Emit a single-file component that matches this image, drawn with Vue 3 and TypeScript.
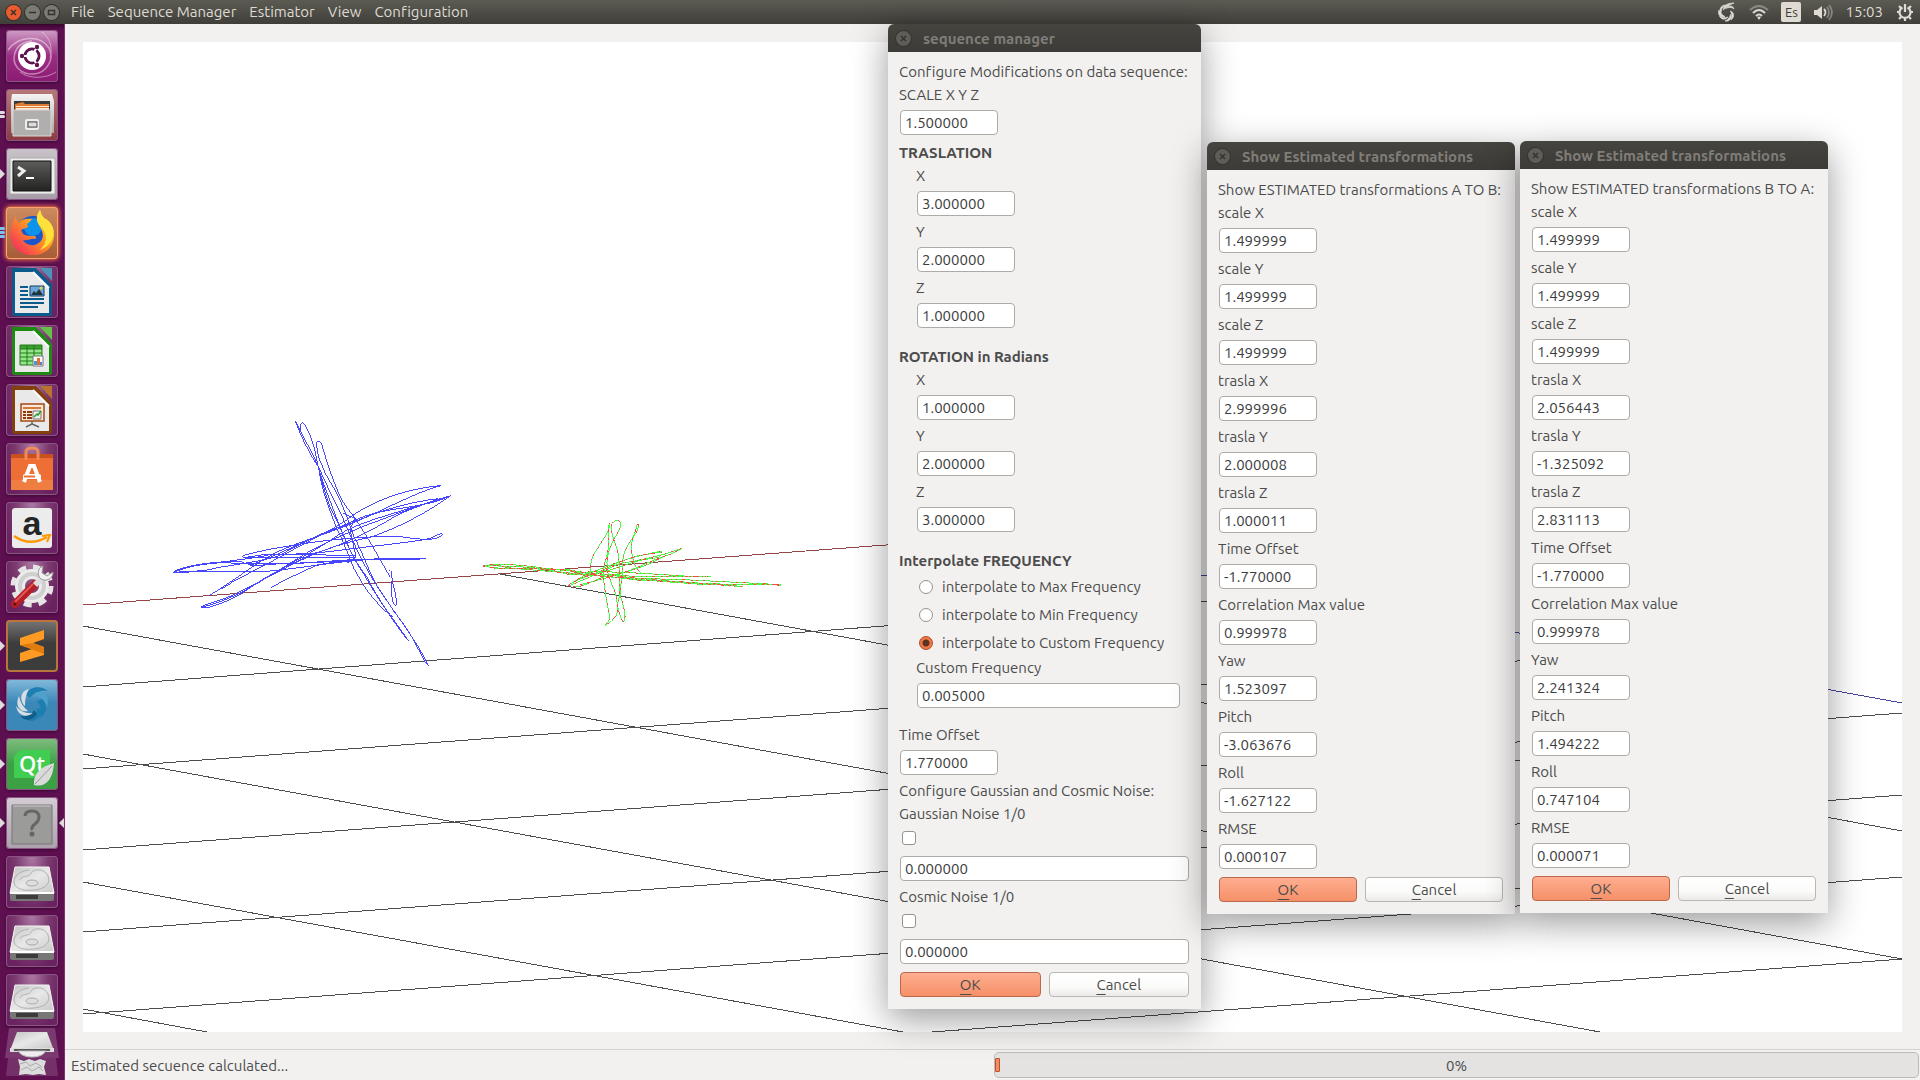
<script setup lang="ts">
import { reactive, ref } from 'vue'

interface Field {
  id: string
  label: string
  value: string
}

interface EstimateWindow {
  id: string
  heading: string
  fields: Field[]
}

const menus = ['File', 'Sequence Manager', 'Estimator', 'View', 'Configuration']

const translation = reactive<Field[]>([
  { id: 'tx', label: 'X', value: '3.000000' },
  { id: 'ty', label: 'Y', value: '2.000000' },
  { id: 'tz', label: 'Z', value: '1.000000' },
])

const rotation = reactive<Field[]>([
  { id: 'rx', label: 'X', value: '1.000000' },
  { id: 'ry', label: 'Y', value: '2.000000' },
  { id: 'rz', label: 'Z', value: '3.000000' },
])

const noise = reactive([
  { id: 'gaussian', label: 'Gaussian Noise 1/0', on: false, value: '0.000000' },
  { id: 'cosmic', label: 'Cosmic Noise 1/0', on: false, value: '0.000000' },
])

const frequencyModes = ['Max', 'Min', 'Custom']
const frequencyMode = ref('Custom')
const scale = ref('1.500000')
const customFrequency = ref('0.005000')
const timeOffset = ref('1.770000')

const estimateLabels = [
  'scale X', 'scale Y', 'scale Z', 'trasla X', 'trasla Y', 'trasla Z',
  'Time Offset', 'Correlation Max value', 'Yaw', 'Pitch', 'Roll', 'RMSE',
]

function makeFields(prefix: string, values: string[]): Field[] {
  return values.map((value, i) => ({ id: `${prefix}-${i}`, label: estimateLabels[i], value }))
}

const estimates = reactive<EstimateWindow[]>([
  {
    id: 'ab',
    heading: 'Show ESTIMATED transformations A TO B:',
    fields: makeFields('ab', [
      '1.499999', '1.499999', '1.499999', '2.999996', '2.000008', '1.000011',
      '-1.770000', '0.999978', '1.523097', '-3.063676', '-1.627122', '0.000107',
    ]),
  },
  {
    id: 'ba',
    heading: 'Show ESTIMATED transformations B TO A:',
    fields: makeFields('ba', [
      '1.499999', '1.499999', '1.499999', '2.056443', '-1.325092', '2.831113',
      '-1.770000', '0.999978', '2.241324', '1.494222', '0.747104', '0.000071',
    ]),
  },
])

const gridLines = [
  [500, 574, 1902, 831], [83, 626, 1902, 959], [83, 754, 1600, 1032],
  [83, 882, 903, 1032], [83, 1009, 207, 1032],
  [83, 687, 1304, 594], [83, 769, 1623, 653], [83, 850, 1902, 713],
  [83, 932, 1902, 795], [83, 1014, 1902, 877], [932, 1032, 1902, 959],
]

// Trajectories are stored at three times the scene resolution.
const blueTracks = [
  'M436 62C450 105 478 160 505 200C520 260 535 320 566 372C590 430 600 460 640 520C680 590 740 680 776 724',
  'M436 62C460 110 490 165 512 215C545 290 575 340 598 400C630 470 660 530 690 570C740 650 800 720 836 798L826 788C800 740 780 690 728 630',
  'M452 90C448 70 456 62 464 74C490 120 495 150 503 195C515 240 540 300 558 350C590 430 610 480 650 530C690 610 740 670 775 722',
  'M500 128C506 118 512 124 516 135C530 185 545 230 560 265C580 320 605 335 625 370C665 430 690 480 720 530',
  'M500 128C500 170 515 195 540 245C575 300 590 350 612 410C650 480 660 540 720 615',
  'M505 200C520 290 540 330 560 385C585 430 600 490 640 555C670 600 710 640 728 650',
  'M718 512C728 510 724 530 728 550C738 580 740 600 738 615C730 618 724 600 724 545',
  'M872 257C800 262 690 290 610 345C560 385 480 420 410 460C340 500 270 530 178 586',
  'M872 257C800 276 700 330 630 360C540 400 430 430 370 462C300 500 250 545 178 586',
  'M902 287C830 325 720 320 640 350C560 385 480 420 430 440C380 465 340 480 300 497',
  'M864 296C780 306 690 330 600 372C510 395 440 440 380 470C310 490 230 495 160 512L70 517',
  'M902 287C820 310 720 350 650 375C540 420 480 450 420 490C350 530 260 600 152 622C170 630 250 600 290 570C360 520 430 490 480 465C560 440 620 415 700 370C770 325 830 312 902 287',
  'M902 287C820 345 740 385 660 412C590 425 520 450 480 468C420 495 340 540 260 580C220 600 180 606 152 622',
  'M820 312C700 350 620 370 560 408C500 450 440 480 415 495',
  'M878 403C860 425 810 418 750 410C660 408 580 415 480 428C400 440 340 450 280 466C272 476 290 472 340 464C430 460 520 465 614 468',
  'M878 403C870 395 850 418 815 420C740 432 650 440 560 452C500 460 440 464 370 462C290 480 210 484 120 500',
  'M828 475C740 474 610 478 530 484C430 492 300 495 230 488C170 488 110 500 70 517C160 514 260 516 350 514C450 505 560 485 640 480C710 478 780 482 828 475',
  'M70 517C90 500 180 484 270 484C300 496 320 500 350 493C430 490 540 488 608 478',
  'M278 472L610 472M580 340L614 355L600 390L618 470L590 490M364 563C400 540 450 520 500 495C560 485 600 480 640 478',
]

const greenTracks = [
  'M40 197C90 190 150 194 210 203C270 212 340 215 390 222C500 236 600 244 700 250C790 255 870 252 930 255',
  'M40 199L110 207L250 207L370 220L470 228L600 229L724 230',
  'M60 194L130 205L260 216L390 226L500 240L640 246L740 254L818 260',
  'M70 204L200 207L290 208L400 230L540 236L660 240L780 246L932 254L932 257L905 252',
  'M50 196L180 202L300 220L380 214L520 220L640 228L720 230',
  'M210 203L290 222L390 228L560 243L680 252L800 257',
  'M294 256C340 228 370 225 410 205C460 175 520 165 575 153',
  'M296 258C350 235 400 215 450 190C510 180 570 170 636 145',
  'M310 261C350 262 380 230 430 225C500 210 530 185 600 163L636 145',
  'M324 236C380 220 420 212 480 190C520 175 550 178 570 170',
  'M330 254C390 240 440 225 500 205C540 195 570 172 600 163',
  'M300 252L345 225L430 192L500 168L575 156',
  'M418 68C425 90 390 130 370 165C360 190 360 210 362 220',
  'M418 68C412 100 420 140 410 170C395 210 400 240 408 290C412 320 420 340 418 360L406 376',
  'M426 70C440 55 455 62 452 78C445 100 430 115 418 150C400 200 420 240 435 275C445 310 442 335 440 345C430 360 420 368 406 376',
  'M424 72C422 110 440 130 445 165C450 200 446 250 448 290C436 320 450 345 458 366',
  'M506 74C500 68 500 85 490 110C470 140 458 160 458 190C460 230 448 260 452 290C460 320 468 340 464 360L458 366',
  'M506 74C506 95 484 110 485 135C484 170 490 195 514 222',
]
</script>

<template>
  <div class="desktop">
    <header class="panel">
      <div class="window-controls">
        <button class="control close" aria-label="Close">
          <svg viewBox="0 0 15 15"><path d="M5 5l5 5M10 5l-5 5" /></svg>
        </button>
        <button class="control" aria-label="Minimize">
          <svg viewBox="0 0 15 15"><path d="M4 7.500h7" /></svg>
        </button>
        <button class="control" aria-label="Restore">
          <svg viewBox="0 0 15 15"><path d="M4.500 5.500h6v4h-6z" /></svg>
        </button>
      </div>
      <nav class="menus">
        <button v-for="menu in menus" :key="menu" class="menu">{{ menu }}</button>
      </nav>
      <div class="indicators">
        <svg class="indicator" viewBox="0 0 20 20" aria-hidden="true">
          <g fill="#dfdbd2" stroke="#dfdbd2" stroke-width=".700">
            <path d="M17 1C11 1 6 3 6.500 8C8 5 12 3 17 1z" /><path d="M8 3C3 4 2 8 4 12C4 8 5 5 8 3z" />
            <path d="M2 8C0 13 4 16 8 14.500C5 13 3 11 2 8z" /><path d="M2.500 14C4 18 9 18 11 15C8 16 5 16 2.500 14z" />
            <path d="M8 19C13 20 15 16 13.500 12.500C13 15 11 18 8 19z" /><path d="M14 18C18 15 17 10 13.500 9C15 12 15 15 14 18z" />
            <path d="M17 7C16 3 11 3 8.500 6.500C12 5 15 5 17 7z" />
          </g>
        </svg>
        <svg class="indicator" viewBox="0 0 20 20" aria-hidden="true">
          <g fill="none" stroke="#dfdbd2" stroke-width="2">
            <path d="M1 8Q10 0 19 8" opacity=".4" /><path d="M4 11Q10 5 16 11" /><path d="M7 14Q10 11 13 14" />
          </g>
          <path d="M10 18l-2-3q2-1 4 0z" fill="#dfdbd2" />
        </svg>
        <span class="keyboard">Es</span>
        <svg class="indicator" viewBox="0 0 20 20" aria-hidden="true">
          <path d="M1 8h3l5-4v13l-5-4H1z" fill="#dfdbd2" />
          <g fill="none" stroke="#dfdbd2" stroke-width="1.800">
            <path d="M11 7q3 3 0 7" /><path d="M14 5q4 5 0 11M16 3q6 7 0 15" opacity=".4" />
          </g>
        </svg>
        <span class="clock">15:03</span>
        <svg class="indicator" viewBox="0 0 20 20" aria-hidden="true">
          <path d="M7.500 5.500a5.500 5.500 0 1 0 5 0" fill="none" stroke="#dfdbd2" stroke-width="2.200" />
          <path d="M10 2v8M2 10h3M15 10h3M4 4l2 2M16 4l-2 2M4 17l2-2M16 17l-2-2M10 15v4" stroke="#dfdbd2" stroke-width="2.200" />
        </svg>
      </div>
    </header>

    <div class="workspace">
      <aside class="launcher">
        <svg class="defs" aria-hidden="true">
          <defs>
            <linearGradient id="metal" x2="0" y2="1">
              <stop offset="0" stop-color="#f4f4f4" /><stop offset="1" stop-color="#a9a9a9" />
            </linearGradient>
            <linearGradient id="disk" x2="1" y2="1">
              <stop offset="0" stop-color="#c4c4c4" /><stop offset=".5" stop-color="#e8e8e8" /><stop offset="1" stop-color="#c9c9c9" />
            </linearGradient>
            <linearGradient id="screen" x2="0" y2="1">
              <stop offset="0" stop-color="#5c5c5a" /><stop offset="1" stop-color="#232322" />
            </linearGradient>
            <linearGradient id="fox" x1="1" y1="0" x2="0" y2="1">
              <stop offset="0" stop-color="#fff13a" /><stop offset=".45" stop-color="#ff9a1f" /><stop offset="1" stop-color="#f5156c" />
            </linearGradient>
            <symbol id="drive" viewBox="0 0 52 52">
              <path d="M9 11h34l5 26H4z" fill="url(#disk)" stroke="#f5f5f5" />
              <path d="M4 37h44v6q0 2-2 2H6q-2 0-2-2z" fill="#777" />
              <path d="M4 36h44v2H4z" fill="#fff" />
              <path d="M10 39h22v4H10z" fill="#3b3b3b" />
              <path d="M23 14C12 15 7 22 8 27C10 34 20 35 28 34C40 33 45 27 42 20C39 13 31 13 27 15C24 17 26 19 21 20C17 21 15 21 14 24" fill="none" stroke="#b2b2b2" />
              <ellipse cx="26" cy="27" rx="6" ry="3" fill="#ddd" stroke="#aaa" />
            </symbol>
          </defs>
        </svg>

        <button class="tile dash" aria-label="Search your computer">
          <svg viewBox="0 0 52 52">
            <g fill="none" stroke="#fff" opacity=".45">
              <path d="M2 20C12 6 34 4 43 18C49 30 40 43 28 44C16 45 8 37 8 28C9 16 16 12 26 11" stroke-width="1.500" />
              <path d="M50 42C40 49 22 49 14 42M36 2C44 8 47 18 44 28" />
            </g>
            <circle cx="26" cy="26" r="14" fill="#fff" />
            <circle cx="26" cy="26" r="7" fill="none" stroke="#5d1350" stroke-width="3" />
            <path d="M26 26L16 26M26 26L31 17M26 26L31 35" stroke="#fff" stroke-width="2" />
            <circle cx="26" cy="26" r="5.500" fill="#fff" />
            <g fill="#5d1350"><circle cx="16" cy="26" r="2.200" /><circle cx="31" cy="17" r="2.200" /><circle cx="31" cy="35" r="2.200" /></g>
          </svg>
        </button>
        <button class="tile files" aria-label="Files">
          <span class="pips"><i></i><i></i></span>
          <svg viewBox="0 0 52 52">
            <path d="M6 5h40l2 7v32H5V12z" fill="url(#metal)" />
            <path d="M8 12h36v10H8z" fill="#3a3a38" />
            <path d="M9 15l8-2 2 2h24v8H9z" fill="#e07b33" /><path d="M10 17h33v1H10zM10 19h33v2H10z" fill="#fbe8d0" />
            <path d="M7 21h38v26H7z" fill="#b0afad" stroke="#d8d8d6" />
            <rect x="20" y="31" width="12" height="9" rx="1" fill="#bbb" stroke="#eee" stroke-width="2" />
            <rect x="22" y="33" width="9" height="5" fill="#ddd" stroke="#555" />
          </svg>
        </button>
        <button class="tile terminal" aria-label="Terminal">
          <span class="arrow"></span>
          <svg viewBox="0 0 52 52">
            <rect x="4" y="10" width="45" height="36" rx="1" fill="#eee" stroke="#aaa" />
            <path d="M7 13h38v30H7z" fill="url(#screen)" stroke="#111" />
            <path d="M12 19l6 4-6 5" fill="none" stroke="#eee" stroke-width="3" /><path d="M20 30h8" stroke="#fff" stroke-width="2" />
          </svg>
        </button>
        <button class="tile firefox" aria-label="Firefox">
          <span class="pips three"><i></i><i></i><i></i></span>
          <svg viewBox="0 0 52 52">
            <circle cx="27" cy="26" r="17" fill="#1c56c9" /><circle cx="27" cy="20" r="9" fill="#0d93ec" />
            <path d="M10 9C6 16 3 25 5 32C8 44 19 49 29 48C41 47 49 38 48 26C48 19 42 13 38 11Q35 8 34 3C30 9 30 14 34 20C39 28 37 34 31 37C26 40 19 37 17 33C22 34 25 31 29 32Q31 31 29 29C25 29 20 29 17 27L15 23L22 20L21 17Q24 15 26 12C19 11 15 13 13 16Q10 14 10 9z" fill="url(#fox)" />
            <path d="M34 3C29 10 30 15 36 21C42 28 41 36 34 43C46 39 51 26 45 17Q43 13 38 11Q35 8 34 3z" fill="#ffe13b" />
          </svg>
        </button>
        <button class="tile" aria-label="LibreOffice Writer">
          <svg viewBox="0 0 52 52">
            <path d="M6 2h24l16 17v28q0 3-3 3H9q-3 0-3-3z" fill="#0b5a8c" /><path d="M34 2h12v13z" fill="#4b93b8" />
            <path d="M9 6h18l16 16v25H9z" fill="#e9e9e9" /><path d="M27 6l16 16" stroke="#fff" stroke-width="2" />
            <path d="M14 21h8M14 25h8M14 29h8M14 33h24M14 37h24M14 41h18" stroke="#0b5a8c" stroke-width="2" />
            <path d="M24 20h14v10H24z" fill="#6aa7d8" stroke="#0b3f68" /><path d="M25 29l3-4 2 2 3-4 4 6z" fill="#24343b" /><circle cx="35" cy="22" r="1.500" fill="#edcb42" />
          </svg>
        </button>
        <button class="tile" aria-label="LibreOffice Calc">
          <svg viewBox="0 0 52 52">
            <path d="M6 2h24l16 17v28q0 3-3 3H9q-3 0-3-3z" fill="#1e8a14" /><path d="M34 2h12v13z" fill="#64c04a" />
            <path d="M9 6h18l16 16v25H9z" fill="#e9e9e9" /><path d="M27 6l16 16" stroke="#fff" stroke-width="2" />
            <path d="M14 20h22v20H14z" fill="#96e58b" /><path d="M14 20h22v4H14z" fill="#3c9f31" />
            <path d="M14 20h22v20H14zM14 24h22M14 28h22M14 32h22M14 36h22M21 20v20M28 20v20" fill="none" stroke="#1e7a18" />
            <path d="M27 31h10v10H27z" fill="#fff" stroke="#777" /><path d="M28 36h3v4h-3z" fill="#3a9bdc" /><path d="M31 33h3v7h-3z" fill="#e8702a" /><path d="M34 37h2v3h-2z" fill="#5a7bd0" />
          </svg>
        </button>
        <button class="tile" aria-label="LibreOffice Impress">
          <svg viewBox="0 0 52 52">
            <path d="M6 2h24l16 17v28q0 3-3 3H9q-3 0-3-3z" fill="#83400f" /><path d="M34 2h12v13z" fill="#b9732f" />
            <path d="M9 6h18l16 16v25H9z" fill="#e9e9e9" /><path d="M27 6l16 16" stroke="#fff" stroke-width="2" />
            <path d="M15 20h23v17H15z" fill="#fbe7d8" stroke="#a34a17" stroke-width="1.500" /><path d="M17 24h18" stroke="#d57a3d" stroke-width="2" />
            <path d="M17 28h9M17 31h9M17 34h9" stroke="#8c3b10" stroke-width="2" stroke-dasharray="3 1 5 0" />
            <path d="M27 27h8v8h-8z" fill="#eee" stroke="#777" /><path d="M28 33l3-3 1 1 3-4" fill="none" stroke="#2aa02a" stroke-width="1.500" />
            <path d="M26 37v3l-6 3M26 40l7 3" fill="none" stroke="#666" stroke-width="1.500" />
          </svg>
        </button>
        <button class="tile" aria-label="Ubuntu Software">
          <svg viewBox="0 0 52 52">
            <path d="M5 11h42v36H5z" fill="#ee6f35" /><path d="M5 11h42v4H5z" fill="#c95120" /><path d="M5 37h42v10H5z" fill="#f07d42" />
            <path d="M20 17V9q0-4 6-4t6 4v8" fill="none" stroke="#f08a5b" stroke-width="3" />
            <path d="M18 39l6-16h4l6 16" fill="none" stroke="#fff" stroke-width="4" /><rect x="17" y="31" width="18" height="5" rx="2" fill="#fff" /><path d="M18 33.500h11" stroke="#ee6f35" stroke-width="2" />
          </svg>
        </button>
        <button class="tile" aria-label="Amazon">
          <svg viewBox="0 0 52 52">
            <rect x="6" y="6" width="40" height="40" rx="3" fill="#ececec" />
            <text x="26" y="33" text-anchor="middle" font-family="Liberation Sans, sans-serif" font-weight="700" font-size="34" fill="#242424">a</text>
            <path d="M8 34Q24 45 41 35" fill="none" stroke="#f90" stroke-width="2.500" /><path d="M36 34l8-1-3 7" fill="none" stroke="#f90" stroke-width="2" />
          </svg>
        </button>
        <button class="tile" aria-label="System Settings">
          <svg viewBox="0 0 52 52">
            <circle cx="26" cy="25" r="19" fill="none" stroke="#e4e4e4" stroke-width="5" stroke-dasharray="8 7" />
            <circle cx="26" cy="25" r="12" fill="none" stroke="#ececec" stroke-width="10" /><circle cx="26" cy="25" r="12" fill="none" stroke="#cfcfcf" stroke-width="4" />
            <path d="M9 43L29 23" stroke="#b81f24" stroke-width="8" stroke-linecap="round" /><path d="M9 41L27 23" stroke="#e0575b" stroke-width="2" />
            <circle cx="9" cy="43" r="1.500" fill="#5c0f12" />
            <path d="M29 24L36 17" stroke="#ddd" stroke-width="6" /><path d="M37 5C31 7 31 15 35 18C40 21 47 18 47 11L41 15L36 12z" fill="#f1f1f1" stroke="#999" />
          </svg>
        </button>
        <button class="tile sublime" aria-label="Sublime Text">
          <span class="arrow"></span>
          <svg viewBox="0 0 52 52">
            <path d="M14 18L38 10v9L27 23l11 4v8L14 42v-9l12-4-12-4z" fill="#ff9a22" /><path d="M14 25L38 34v-7L27 23z" fill="#e07c10" />
          </svg>
        </button>
        <button class="tile viewer" aria-label="Estimator">
          <span class="arrow"></span>
          <svg viewBox="0 0 52 52">
            <g fill="#1d7fb0">
              <path d="M20 16C24 6 36 7 42 12C35 11 28 13 24 19z" /><path d="M30 13C40 12 44 20 41 28C39 21 35 17 28 17z" fill="#4ba3cc" />
              <path d="M36 20C43 27 40 35 34 39C36 32 35 27 31 22z" /><path d="M36 30C36 39 29 43 22 42C29 39 31 35 31 29z" />
              <path d="M31 35C26 43 18 42 14 37C21 38 25 36 28 31z" fill="#105e8b" />
            </g>
            <g fill="#d7dde2"><path d="M23 10C13 12 14 23 19 27C19 20 20 15 23 10z" /><path d="M13 17C8 27 15 34 22 32C17 28 14 23 13 17z" /><path d="M10 27C12 37 20 39 27 34C20 35 14 32 10 27z" /></g>
          </svg>
        </button>
        <button class="tile qt" aria-label="Qt Creator">
          <span class="arrow"></span>
          <svg viewBox="0 0 52 52">
            <path d="M14 12h30v22l-6 6H8V18z" fill="#41cd52" />
            <text x="26" y="34" text-anchor="middle" font-family="Open Sans, sans-serif" font-weight="600" font-size="22" fill="#fff">Qt</text>
            <path d="M48 25C34 29 27 36 28 47C40 50 47 41 48 25z" fill="#dadada" /><path d="M46 28L29 46" stroke="#999" />
          </svg>
        </button>
        <button class="tile unknown" aria-label="Unknown application">
          <span class="arrow"></span><span class="arrow focused"></span>
          <svg viewBox="0 0 52 52">
            <path d="M6 8h40v39H6z" fill="#9b9b9a" stroke="#777" /><path d="M7 9h38" stroke="#ccc" />
            <path d="M19 19q0-5 7-5t7 6q0 4-4 7t-3 6" fill="none" stroke="#666" stroke-width="3" /><circle cx="26" cy="37" r="2.500" fill="#666" />
          </svg>
        </button>
        <button v-for="n in 3" :key="n" class="tile" :aria-label="`Disk ${n}`">
          <svg viewBox="0 0 52 52"><use href="#drive" /></svg>
        </button>
        <button class="tile stack" aria-label="Trash">
          <svg viewBox="0 0 54 50">
            <path d="M4 1h46l4 30H0z" fill="#fff" opacity=".18" /><path d="M3 31h48l2 18H1z" fill="#fff" opacity=".14" />
            <path d="M12 5h30l6 16H6z" fill="url(#disk)" /><path d="M5 21h44v4H5z" fill="#ddd" /><path d="M9 22h36v2H9z" fill="#555" />
            <path d="M13 24h28q-4 6-14 6t-14-6z" fill="#eee" stroke="#bbb" />
            <path d="M13 32l6 2 5-2 6 2 5-2 6 2-2 6 2 8-7-1-6 1-7-1-7 1 1-8z" fill="#dcdcdc" /><path d="M15 37l6-2 4 4 6-3 6 4M16 43l6-3 5 4 7-4 4 4" fill="none" stroke="#aaa" />
          </svg>
        </button>
      </aside>

      <main class="app">
        <div class="scene">
          <svg viewBox="83 42 1819 990" preserveAspectRatio="none" role="img" aria-label="Trajectories">
            <g shape-rendering="crispEdges" fill="none">
              <line v-for="(l, i) in gridLines" :key="i" :x1="l[0]" :y1="l[1]" :x2="l[2]" :y2="l[3]" stroke="#4d4d4d" />
              <path d="M83 605L993 537" stroke="#964646" />
              <path d="M993 537L1902 703" stroke="#4646a0" />
              <g transform="translate(150 400) scale(.333333)" stroke="#4646ff" stroke-width="3">
                <path v-for="(d, i) in blueTracks" :key="i" :d="d" />
              </g>
              <g transform="translate(470 500) scale(.333333)" stroke="#46ff46" stroke-width="3">
                <path v-for="(d, i) in greenTracks" :key="i" :d="d" />
              </g>
              <g transform="translate(470 500) scale(.333333)" stroke="#ff4646" stroke-width="3" stroke-dasharray="5 15 8 19 4 10">
                <path v-for="(d, i) in greenTracks" :key="i" :d="d" />
              </g>
            </g>
          </svg>
        </div>
        <footer class="status">
          <span class="message">Estimated secuence calculated...</span>
          <div class="progress" role="progressbar" aria-valuenow="0"><span class="chunk"></span>0%</div>
        </footer>
      </main>
    </div>

    <form class="dialog manager" @submit.prevent>
      <h2 class="title">
        <button type="button" class="dismiss" aria-label="Close"><svg viewBox="0 0 15 15"><path d="M5 5l5 5M10 5l-5 5" /></svg></button>
        sequence manager
      </h2>
      <div class="body">
        <p class="text">Configure Modifications on data sequence:</p>
        <label class="text" for="scale">SCALE X Y Z</label>
        <input id="scale" v-model="scale" class="entry" type="text">
        <h3 class="text heading">TRASLATION</h3>
        <div class="group">
          <template v-for="f in translation" :key="f.id">
            <label class="text" :for="f.id">{{ f.label }}</label>
            <input :id="f.id" v-model="f.value" class="entry" type="text">
          </template>
        </div>
        <h3 class="text heading">ROTATION in Radians</h3>
        <div class="group">
          <template v-for="f in rotation" :key="f.id">
            <label class="text" :for="f.id">{{ f.label }}</label>
            <input :id="f.id" v-model="f.value" class="entry" type="text">
          </template>
        </div>
        <h3 class="text heading">Interpolate FREQUENCY</h3>
        <div class="group">
          <label v-for="mode in frequencyModes" :key="mode" class="option">
            <input v-model="frequencyMode" class="radio" type="radio" name="frequency" :value="mode">
            interpolate to {{ mode }} Frequency
          </label>
          <label class="text" for="custom">Custom Frequency</label>
          <input id="custom" v-model="customFrequency" class="entry wide" type="text">
        </div>
        <label class="text" for="offset">Time Offset</label>
        <input id="offset" v-model="timeOffset" class="entry" type="text">
        <p class="text">Configure Gaussian and Cosmic Noise:</p>
        <template v-for="n in noise" :key="n.id">
          <label class="text" :for="n.id">{{ n.label }}</label>
          <div class="check-row"><input :id="n.id" v-model="n.on" class="check" type="checkbox"></div>
          <input v-model="n.value" class="entry wide" type="text" :aria-label="`${n.label} value`">
        </template>
        <div class="actions">
          <button type="submit" class="button primary"><span><u>O</u>K</span></button>
          <button type="button" class="button"><span><u>C</u>ancel</span></button>
        </div>
      </div>
    </form>

    <form v-for="w in estimates" :key="w.id" class="dialog estimate" :class="w.id" @submit.prevent>
      <h2 class="title">
        <button type="button" class="dismiss" aria-label="Close"><svg viewBox="0 0 15 15"><path d="M5 5l5 5M10 5l-5 5" /></svg></button>
        Show Estimated transformations
      </h2>
      <div class="body">
        <p class="text">{{ w.heading }}</p>
        <template v-for="f in w.fields" :key="f.id">
          <label class="text" :for="f.id">{{ f.label }}</label>
          <input :id="f.id" v-model="f.value" class="entry" type="text">
        </template>
        <div class="actions">
          <button type="submit" class="button primary"><span><u>O</u>K</span></button>
          <button type="button" class="button"><span><u>C</u>ancel</span></button>
        </div>
      </div>
    </form>
  </div>
</template>

<style>
body {
  margin: 0;
  background: #f2f1f0;
}
</style>

<style scoped>
.desktop {
  position: relative;
  display: flex;
  flex-direction: column;
  min-height: 100vh;
  overflow: hidden;
  background: #f2f1f0;
  color: #4c4c4c;
  font-family: Ubuntu, "Open Sans", "Noto Sans", sans-serif;
  font-size: 15px;
  font-variant-ligatures: none;
  line-height: 18px;
}
button, input {
  box-sizing: border-box;
  margin: 0;
  padding: 0;
  border: 0;
  font: inherit;
  color: inherit;
}
svg { display: block; overflow: visible; }

.panel {
  display: flex;
  align-items: center;
  height: 24px;
  padding: 0 5px 0 6px;
  background: linear-gradient(#5c5b53, #3f3e39);
  color: #dfdbd2;
}
.window-controls { display: flex; gap: 4px; }
.control, .dismiss {
  width: 15px;
  height: 15px;
  border-radius: 50%;
  background: #7b7a74;
  box-shadow: 0 0 0 1px #35342f;
}
.control.close { background: #ec5b2e; }
.control path, .dismiss path { fill: none; stroke: #34332e; stroke-width: 1.500; }
.menus { display: flex; gap: 13px; margin-left: 12px; }
.menu { background: none; }
.indicators { display: flex; align-items: center; gap: 12px; margin-left: auto; }
.indicator { width: 20px; height: 20px; }
.keyboard {
  width: 20px;
  border-radius: 2px;
  background: #dfdbd2;
  color: #3c3b37;
  font-size: 13px;
  line-height: 20px;
  text-align: center;
}

.workspace { display: flex; flex: 1; }
.launcher {
  position: relative;
  display: flex;
  flex-direction: column;
  gap: 7px;
  box-sizing: border-box;
  width: 65px;
  padding: 6px 6px 0;
  border-right: 1px solid #7a3370;
  background: linear-gradient(#36052c, #5e0f50 6px);
}
.defs { position: absolute; width: 0; height: 0; overflow: hidden; }
.tile {
  position: relative;
  width: 52px;
  height: 52px;
  border-radius: 4px;
  background: radial-gradient(ellipse at 50% 0, #ad7aa4, #7c3a70 45%, #6a2360 80%);
  box-shadow: inset 0 0 0 1px #8b5583, 0 1px 3px #3c0833;
}
.tile.dash { background: linear-gradient(#cf9dc6, #9c2d85 50%, #8b1a72); }
.tile.files { background: linear-gradient(#b77a79, #8c3b3f); }
.tile.terminal { background: linear-gradient(#c9c3c9, #a79ba8); }
.tile.firefox { background: linear-gradient(#cd8b5f, #a45c38); box-shadow: inset 0 0 0 1px #ffa56a, 0 0 4px 1px #f07746; }
.tile.sublime { background: linear-gradient(#777, #3c3c3c 45%); box-shadow: inset 0 0 0 2px #b8763c; }
.tile.viewer { background: linear-gradient(#84bbdb, #3b88b8 45%); }
.tile.qt { background: linear-gradient(#82bc80, #3ca045 50%); }
.tile.unknown { background: linear-gradient(#d5cdd5, #aca0ac); }
.tile.stack { width: 54px; height: 50px; margin: -6px -1px 0; background: none; box-shadow: none; }
.arrow {
  position: absolute;
  top: 21px;
  left: -6px;
  border: 5px solid transparent;
  border-right-width: 0;
  border-left-color: #ddd;
}
.arrow.focused {
  right: -6px;
  left: auto;
  border-right: 5px solid #ddd;
  border-left-width: 0;
}
.pips {
  position: absolute;
  top: 22px;
  left: -6px;
  display: grid;
  gap: 1px;
}
.pips.three { top: 20px; }
.pips i { width: 5px; height: 3px; border-radius: 0 2px 2px 0; background: #ddd; }
.pips.three i { background: #7cc4ee; }

.app { display: flex; flex: 1; flex-direction: column; min-width: 0; }
.scene { flex: 1; margin: 18px 18px 17px; background: #fff; }
.scene svg { width: 100%; height: 990px; overflow: hidden; }
.status {
  display: flex;
  align-items: stretch;
  box-sizing: border-box;
  height: 31px;
  padding: 2px 1px 2px 6px;
  border-top: 1px solid #d5d3d0;
}
.message { flex: 1; line-height: 28px; }
.progress {
  position: relative;
  box-sizing: border-box;
  flex: 1;
  border: 1px solid #bdbbb8;
  border-radius: 5px;
  background: #e4e3e1;
  line-height: 26px;
  text-align: center;
}
.chunk {
  position: absolute;
  top: 5px;
  left: 0;
  box-sizing: border-box;
  width: 5px;
  height: 14px;
  border: 1px solid #b8512c;
  border-radius: 1px;
  background: #f58b63;
}

.dialog {
  position: absolute;
  top: 24px;
  left: 888px;
  width: 313px;
  border-radius: 6px 6px 0 0;
  background: #f2f1f0;
  box-shadow: 0 10px 36px rgba(0, 0, 0, .4);
}
.dialog.ab { top: 142px; left: 1207px; width: 308px; }
.dialog.ba { top: 141px; left: 1520px; width: 308px; }
.title {
  display: flex;
  align-items: center;
  gap: 12px;
  box-sizing: border-box;
  height: 28px;
  margin: 0;
  padding: 1px 0 0 8px;
  border-radius: 6px 6px 0 0;
  background: linear-gradient(#45443f, #3c3b37);
  color: #807d78;
  font-size: 15px;
  font-weight: 700;
}
.dismiss { background: #5e5d58; }
.body {
  display: flex;
  flex-direction: column;
  align-items: flex-start;
  gap: 5px;
  padding: 11px 11px 12px;
}
.text { margin: 0; white-space: nowrap; }
.heading { margin-top: 2px; font-size: 15px; font-weight: 700; }
.group {
  display: flex;
  flex-direction: column;
  align-items: flex-start;
  gap: 5px;
  align-self: stretch;
  padding: 0 9px 11px 17px;
}
.entry {
  width: 98px;
  height: 25px;
  margin: 1px 1px 2px;
  padding: 0 4px;
  border: 1px solid #aeaba6;
  border-radius: 4px;
  background: #fff;
  color: #3c3c3c;
}
.entry.wide { width: auto; align-self: stretch; }
.option { display: flex; align-items: center; gap: 9px; height: 23px; padding-left: 3px; }
.radio, .check {
  appearance: none;
  width: 14px;
  height: 14px;
  border: 1px solid #96938e;
  background: #fff;
}
.radio { border-radius: 50%; }
.radio:checked {
  border-color: #b04a25;
  background: radial-gradient(circle, #5b3322 3px, #f07746 4px);
}
.check { border-radius: 3px; }
.check-row { display: flex; align-items: flex-start; box-sizing: border-box; height: 22px; padding: 3px 0 0 3px; }
.actions { display: flex; gap: 8px; align-self: stretch; padding: 1px 1px 0; }
.button {
  flex: 1;
  height: 25px;
  border: 1px solid #bab7b3;
  border-radius: 4px;
  background: linear-gradient(#fff, #fbfbfa 60%, #ebeae8);
}
.button.primary { border-color: #b9694c; background: linear-gradient(#ffae90, #f59068); }
.button u { text-underline-offset: 4px; }
</style>
